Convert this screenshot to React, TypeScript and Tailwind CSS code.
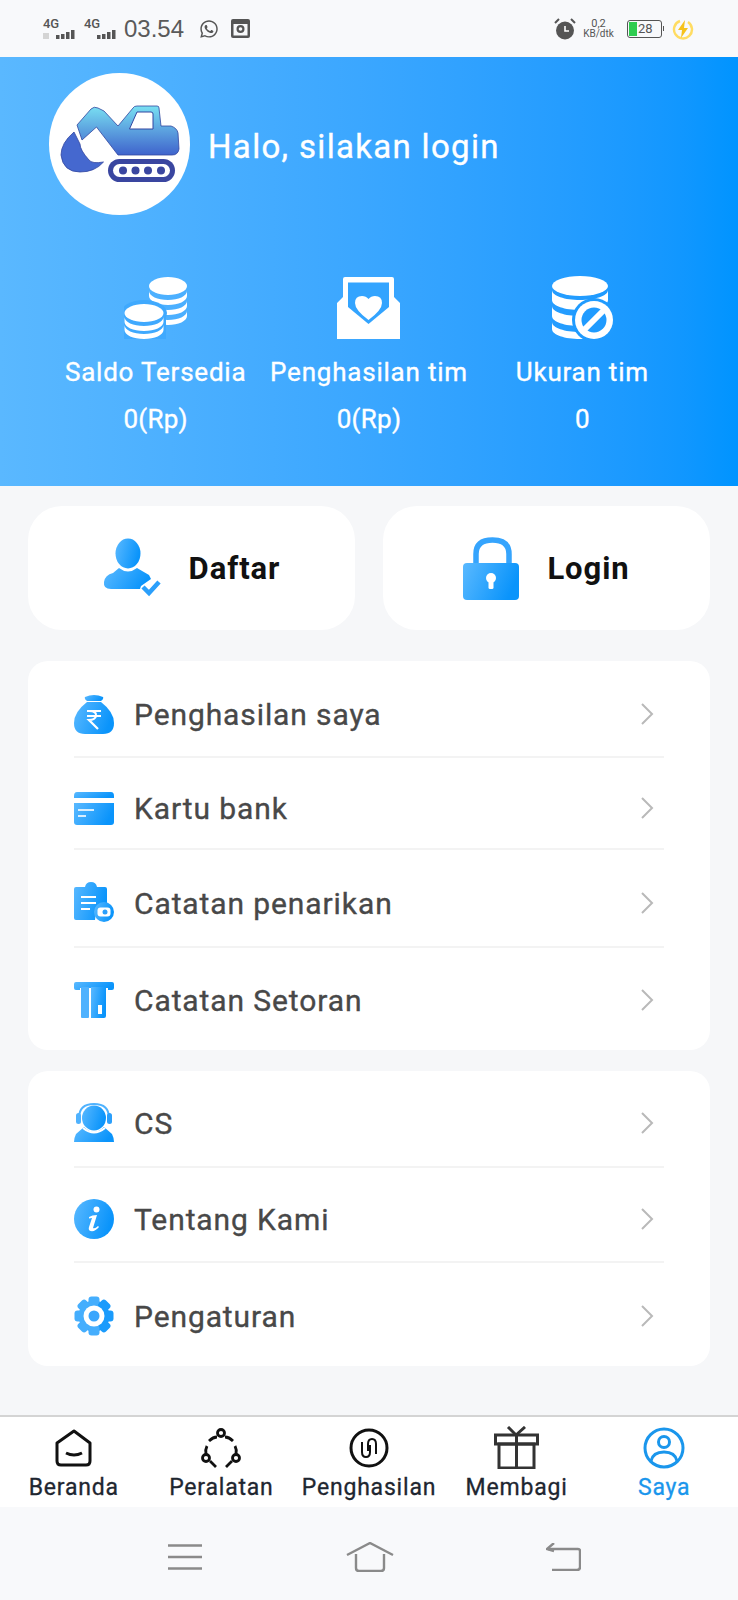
import { FaWhatsapp } from "react-icons/fa";
import type { ReactNode } from "react";

const font = "font-['Roboto',sans-serif]";

const Defs = () => (
  <svg className="absolute h-0 w-0">
    <defs>
      <linearGradient id="blue" x1="0" y1="0" x2="1" y2="0.3">
        <stop offset="0" stopColor="#5ab9ff" />
        <stop offset="1" stopColor="#0a94fb" />
      </linearGradient>
      <linearGradient id="digger" x1="0" y1="0" x2="0" y2="1">
        <stop offset="0" stopColor="#79e0f2" />
        <stop offset="1" stopColor="#3f63cc" />
      </linearGradient>
    </defs>
  </svg>
);

const Signal = ({ faded }: { faded?: boolean }) => (
  <div className="flex w-[32px] flex-col">
    <span className="text-[13px] leading-[11px] font-medium tracking-[-0.02em] text-[#555]">4G</span>
    <svg width="32" height="9" viewBox="0 0 32 9" className="mt-[1px]">
      {faded && <rect x="0" y="3" width="6" height="6" fill="#d4d4d4" />}
      <rect x="13" y="5" width="3.500" height="4" fill="#555" />
      <rect x="18" y="4" width="3.500" height="5" fill="#555" />
      <rect x="23" y="2" width="3.500" height="7" fill="#555" />
      <rect x="28" y="0" width="3.500" height="9" fill="#555" />
    </svg>
  </div>
);

const StatusBar = () => (
  <div className="flex h-[57px] items-center bg-[#f8f9fb] pr-[44px] pl-[43px]">
    <Signal faded />
    <div className="ml-[9px]">
      <Signal />
    </div>
    <span className="ml-[8px] font-['Liberation_Sans',sans-serif] text-[24px] text-[#5a5a5a]">03.54</span>
    <FaWhatsapp className="ml-[15px] text-[20px] text-[#555]" />
    <svg width="19" height="19" viewBox="0 0 19 19" className="ml-[12px]">
      <rect x="0" y="0" width="19" height="19" rx="2" fill="#555" />
      <rect x="2.500" y="5" width="14" height="11.500" fill="#f8f9fb" />
      <circle cx="9.500" cy="10" r="4" fill="#555" />
      <circle cx="9.500" cy="10" r="1.800" fill="#f8f9fb" />
    </svg>
    <div className="flex-1" />
    <svg width="22" height="22" viewBox="0 0 22 22">
      <circle cx="11" cy="12.500" r="9" fill="#555" />
      <path d="M11 8v5h4" fill="none" stroke="#fff" strokeWidth="1.600" />
      <path d="M1 5l4-4M21 5l-4-4" stroke="#555" strokeWidth="2" />
    </svg>
    <div className="ml-[6px] flex w-[33px] flex-col items-center text-[#555]">
      <span className="text-[11px] leading-[10px]">0,2</span>
      <span className="text-[10px] leading-[10px]">KB/dtk</span>
    </div>
    <div className="ml-[12px] flex h-[18px] w-[35px] items-center rounded-[3px] border border-[#555] p-[1px]">
      <div className="h-full w-[8px] bg-[#2ecc4f]" />
      <span className="ml-[1px] text-[13px] leading-none text-[#555]">28</span>
    </div>
    <div className="ml-[1px] h-[5px] w-[1px] bg-[#555]" />
    <svg width="22" height="22" viewBox="0 0 22 22" className="ml-[8px]">
      <path d="M8 3a9 9 0 1 0 8 1" fill="none" stroke="#ffdc62" strokeWidth="2.400" />
      <path d="M13 2L6 12h4l-1 8 7-10h-4z" fill="#f6c21c" />
    </svg>
  </div>
);

const Logo = () => (
  <svg viewBox="49 73 141 142" className="h-[142px] w-[141px] rounded-full bg-white">
    <path
      d="M77 125L91 109Q94 106 98 108L104 111L118 126L133 108Q134 106 137 106L157 106Q159 106 159 108L161 126H171Q177 128 178 133L179 149Q178 155 172 155H118L96.500 127L82 140Z"
      fill="url(#digger)"
      stroke="#3246a0"
      strokeWidth="0.800"
    />
    <path d="M137 112H151Q153 112 153 114V129H129.500Z" fill="#fff" stroke="#3246a0" strokeWidth="1" />
    <path d="M74 132Q61 143 61 155Q63 172 80 172Q95 172 103.500 162Q92 164 89 160Q80 150 80 144Z" fill="#4568cf" stroke="#3246a0" strokeWidth="0.800" />
    <rect x="108" y="159" width="67" height="23" rx="11.500" fill="#3a46a0" />
    <rect x="113" y="164" width="57" height="13" rx="6.500" fill="#fff" />
    {[123, 135.5, 148, 161].map((x) => (
      <circle key={x} cx={x} cy="170.500" r="4" fill="#3a46a0" />
    ))}
  </svg>
);

const band = (x: number, y: number, rx: number) =>
  `M${x} ${y}c0 5 ${rx * 0.45} 9 ${rx} 9s${rx} -4 ${rx} -9v5c0 5 -${rx * 0.45} 9 -${rx} 9s-${rx} -4 -${rx} -9z`;

const CoinsIcon = () => (
  <svg width="64" height="62" viewBox="0 0 64 62">
    <ellipse cx="44" cy="9" rx="19" ry="9" fill="#fff" />
    {[14, 24, 34].map((y) => (
      <path key={y} d={band(25, y, 19)} fill="#fff" />
    ))}
    <ellipse cx="20" cy="36" rx="23" ry="13" fill="#3fa9fe" />
    <rect x="0" y="36" width="42" height="26" fill="#3fa9fe" />
    <ellipse cx="20" cy="36" rx="19.500" ry="9" fill="#fff" />
    {[40, 48].map((y) => (
      <path key={y} d={band(0.5, y, 19.5)} fill="#fff" />
    ))}
  </svg>
);

const EnvelopeIcon = () => (
  <svg width="63" height="62" viewBox="0 0 63 62">
    <path d="M0 26L6 20V2Q6 0 8 0H55Q57 0 57 2V20L63 26V62H0Z" fill="#fff" />
    <path d="M11 5.500H52V30L31.500 47L11 30Z" fill="#33a4ff" />
    <path d="M31.500 43Q18 33 18 26Q18 19 25 19Q29 19 31.500 22Q34 19 38 19Q45 19 45 26Q45 33 31.500 43Z" fill="#fff" />
  </svg>
);

const DatabaseIcon = () => (
  <svg width="63" height="63" viewBox="0 0 63 63">
    <ellipse cx="29" cy="10" rx="28" ry="10" fill="#fff" />
    <path d="M1 14c0 6 13 10 28 10s28 -4 28 -10v10c0 6 -13 10 -28 10s-28 -4 -28 -10z" fill="#fff" />
    <path d="M1 30c0 6 13 10 28 10s28 -4 28 -10v10c0 6 -13 10 -28 10s-28 -4 -28 -10z" fill="#fff" />
    <path d="M1 46c0 6 13 10 28 10s28 -4 28 -10v7c0 6 -13 10 -28 10s-28 -4 -28 -10z" fill="#fff" />
    <circle cx="43" cy="44" r="22" fill="#1f9bff" />
    <circle cx="43" cy="44" r="19" fill="#fff" />
    <circle cx="43" cy="44" r="12.500" fill="#1f9bff" />
    <path d="M33 54L53 34" stroke="#fff" strokeWidth="6" />
  </svg>
);

const stats = [
  { label: "Saldo Tersedia", value: "0(Rp)", icon: <CoinsIcon /> },
  { label: "Penghasilan tim", value: "0(Rp)", icon: <EnvelopeIcon /> },
  { label: "Ukuran tim", value: "0", icon: <DatabaseIcon /> },
];

const Header = () => (
  <div className="h-[429px] bg-gradient-to-r from-[#5ab8ff] to-[#0094ff] px-[49px] pt-[16px]">
    <div className="flex items-center gap-[18px]">
      <Logo />
      <span className="pt-[4px] text-[33px] leading-none tracking-[0.04em] text-white [-webkit-text-stroke:0.35px]">Halo, silakan login</span>
    </div>
    <div className="mt-[61px] grid grid-cols-3">
      {stats.map((stat) => (
        <div key={stat.label} className="flex flex-col items-center text-white">
          <div className="flex h-[63px] items-center">{stat.icon}</div>
          <span className="mt-[17px] text-[26px] leading-[32px] tracking-[0.03em] whitespace-nowrap [-webkit-text-stroke:0.35px]">{stat.label}</span>
          <span className="mt-[15px] text-[26px] leading-[32px] tracking-[0.01em] [-webkit-text-stroke:0.35px]">{stat.value}</span>
        </div>
      ))}
    </div>
  </div>
);

const PersonCheckIcon = () => (
  <svg width="58" height="62" viewBox="104 536 58 62">
    <ellipse cx="129" cy="552.500" rx="12.500" ry="15" fill="url(#blue)" />
    <path d="M120 567Q129 574 138 567L150 574L152 578L142 585L141 588H112Q104 588 105 581Q106 574 114 572Z" fill="url(#blue)" />
    <path d="M144 586L150 592L160 581" fill="none" stroke="#2b9ffb" strokeWidth="4.500" />
  </svg>
);

const LockIcon = () => (
  <svg width="56" height="63" viewBox="466 536 56 63">
    <path d="M479 564V553Q479 539 495.500 539Q512 539 512 553V564" fill="none" stroke="#35a4fd" strokeWidth="5.500" />
    <rect x="466" y="562" width="56" height="37" rx="4" fill="url(#blue)" />
    <circle cx="494" cy="577" r="5" fill="#fff" />
    <rect x="491.500" y="578" width="5" height="10" rx="1.500" fill="#fff" />
  </svg>
);

const Chevron = () => (
  <svg width="14" height="24" viewBox="0 0 14 24" className="shrink-0">
    <path d="M2 2L12 12L2 22" fill="none" stroke="#b9b9b9" strokeWidth="2" />
  </svg>
);

const MoneyBagIcon = () => (
  <svg width="40" height="40" viewBox="0 0 40 40">
    <path d="M11 3Q20 -1 29 3Q30 5 27 7H13Q10 5 11 3Z" fill="url(#blue)" />
    <path d="M13 8H27Q40 18 40 29Q40 40 29 40H11Q0 40 0 29Q0 18 13 8Z" fill="url(#blue)" />
    <path d="M13 17H27M13 22H27M15 17Q23 17 22 22Q21 26 15 26L24 35" fill="none" stroke="#fff" strokeWidth="2.200" />
  </svg>
);

const CardIcon = () => (
  <svg width="40" height="33" viewBox="0 0 40 33">
    <path d="M3 0H37Q40 0 40 4V6H0V4Q0 0 3 0Z" fill="url(#blue)" />
    <path d="M0 11H40V30Q40 33 37 33H3Q0 33 0 30Z" fill="url(#blue)" />
    <path d="M4 18H20M4 24H12" stroke="#fff" strokeWidth="2" opacity="0.8" />
  </svg>
);

const ClipboardIcon = () => (
  <svg width="40" height="42" viewBox="0 0 40 42">
    <path d="M2 5H11Q12 0 17 0Q22 0 23 5H31Q33 5 33 7V22Q22 22 21 38H2Q0 38 0 36V7Q0 5 2 5Z" fill="url(#blue)" />
    <path d="M7 15H22M7 21H22M7 27H16" stroke="#fff" strokeWidth="2" />
    <circle cx="30" cy="30" r="10" fill="url(#blue)" />
    <rect x="23.500" y="25.500" width="13" height="9" rx="3" fill="#fff" />
    <circle cx="31" cy="30" r="2.500" fill="#2b9ffb" />
  </svg>
);

const AtmIcon = () => (
  <svg width="40" height="36" viewBox="0 0 40 36">
    <path d="M2 0H38Q40 0 40 2V6Q40 8 38 8H34V6H6V8H2Q0 8 0 6V2Q0 0 2 0Z" fill="url(#blue)" />
    <rect x="7" y="5" width="8" height="31" rx="1" fill="#4fb2fe" />
    <path d="M17 5H32V34Q32 36 30 36H17Z" fill="url(#blue)" />
    <rect x="24" y="23" width="4" height="9" fill="#fff" />
  </svg>
);

const AgentIcon = () => (
  <svg width="40" height="40" viewBox="0 0 40 40">
    <path d="M5 15Q5 1 20 1Q35 1 35 15" fill="none" stroke="#4fb2fe" strokeWidth="2" />
    <rect x="2" y="10" width="5" height="11" rx="2.500" fill="#4fb2fe" />
    <rect x="33" y="10" width="5" height="11" rx="2.500" fill="#2b9ffb" />
    <ellipse cx="20" cy="15" rx="12" ry="12.500" fill="url(#blue)" />
    <path d="M10 24Q20 34 30 24L38 31Q40 35 40 39H0Q0 35 2 31Z" fill="url(#blue)" />
    <path d="M9 25Q20 34 31 25" fill="none" stroke="#fff" strokeWidth="2" />
  </svg>
);

const InfoIcon = () => (
  <svg width="40" height="40" viewBox="0 0 40 40">
    <circle cx="20" cy="20" r="20" fill="url(#blue)" />
    <circle cx="22.500" cy="10.500" r="3" fill="#fff" />
    <path d="M15 18Q18 16 23 16L19 29Q21 30 24 27L25 28Q21 33 16.500 32Q14 31 15 28L18 19L15 19.500Z" fill="#fff" />
  </svg>
);

const GearIcon = () => (
  <svg width="40" height="40" viewBox="0 0 40 40">
    <circle cx="20" cy="20" r="15.500" fill="url(#blue)" />
    {[0, 45, 90, 135, 180, 225, 270, 315].map((deg) => (
      <rect key={deg} x="14.500" y="0.500" width="11" height="10" rx="3" fill={deg > 0 && deg < 180 ? "#1a9bfc" : "#45aefd"} transform={`rotate(${deg} 20 20)`} />
    ))}
    <circle cx="20" cy="20" r="10.500" fill="#fff" />
    <circle cx="20" cy="20" r="5.500" fill="#3aa6fd" />
  </svg>
);

type Row = { label: string; icon: ReactNode; rowClass: string; last?: boolean };

const firstMenu: Row[] = [
  { label: "Penghasilan saya", icon: <MoneyBagIcon />, rowClass: "h-[97px] pt-[11px]" },
  { label: "Kartu bank", icon: <CardIcon />, rowClass: "h-[92px] pt-[10px]" },
  { label: "Catatan penarikan", icon: <ClipboardIcon />, rowClass: "h-[98px] pt-[10px]" },
  { label: "Catatan Setoran", icon: <AtmIcon />, rowClass: "h-[102px] pt-[2px]", last: true },
];

const secondMenu: Row[] = [
  { label: "CS", icon: <AgentIcon />, rowClass: "h-[97px] pt-[9px]" },
  { label: "Tentang Kami", icon: <InfoIcon />, rowClass: "h-[95px] pt-[9px]" },
  { label: "Pengaturan", icon: <GearIcon />, rowClass: "h-[103px] pt-[2px]", last: true },
];

const Menu = ({ rows }: { rows: Row[] }) => (
  <div className="rounded-[20px] bg-white px-[46px]">
    {rows.map((row) => (
      <div key={row.label} className={`flex items-center ${row.rowClass} ${row.last ? "" : "border-b-2 border-[#f3f3f3]"}`}>
        <div className="flex w-[60px] shrink-0 items-center">{row.icon}</div>
        <span className="flex-1 pt-[2px] text-[30px] leading-none tracking-[0.03em] text-[#484848] [-webkit-text-stroke:0.35px]">{row.label}</span>
        <div className="mr-[10px] flex">
          <Chevron />
        </div>
      </div>
    ))}
  </div>
);

const HomeTab = () => (
  <svg width="38" height="38" viewBox="0 0 38 38">
    <path d="M2 14L19 2L35 14V32Q35 36 31 36H6Q2 36 2 32Z" fill="none" stroke="#111" strokeWidth="3" strokeLinejoin="round" />
    <path d="M11 24Q19 28 27 24" fill="none" stroke="#111" strokeWidth="3" />
  </svg>
);

const ToolsTab = () => (
  <svg width="40" height="40" viewBox="0 0 40 40" fill="none" stroke="#111" strokeWidth="2.800">
    <circle cx="20" cy="5" r="3.500" />
    <circle cx="5" cy="30" r="3.500" />
    <circle cx="35" cy="30" r="3.500" />
    <path d="M8 13Q12 9 16 9M24 9Q28 9 32 13M6 18Q4 22 5 26M34 18Q36 22 35 26M9 33L15 39M31 33L25 39" />
  </svg>
);

const EarnTab = () => (
  <svg width="40" height="40" viewBox="0 0 40 40" fill="none" stroke="#111">
    <circle cx="20" cy="20" r="18" strokeWidth="3" />
    <path d="M13 14V24Q13 29 17 29Q21 29 21 24V17" strokeWidth="2" />
    <path d="M19 23V16Q19 11 23 11Q27 11 27 16V26" strokeWidth="2" />
  </svg>
);

const GiftTab = () => (
  <svg width="45" height="43" viewBox="0 0 45 43" fill="none" stroke="#333" strokeWidth="3">
    <path d="M14 1L22 9L31 1" />
    <rect x="1.500" y="9" width="42" height="9" />
    <rect x="5" y="18" width="35" height="24" />
    <path d="M22.500 9V42" />
  </svg>
);

const MeTab = () => (
  <svg width="42" height="42" viewBox="0 0 42 42" fill="none" stroke="#1a96ec" strokeWidth="3">
    <circle cx="21" cy="21" r="19" />
    <circle cx="21" cy="15" r="5.500" />
    <path d="M8 34Q10 25 21 25Q32 25 34 34" />
  </svg>
);

const tabs = [
  { label: "Beranda", icon: <HomeTab />, active: false },
  { label: "Peralatan", icon: <ToolsTab />, active: false },
  { label: "Penghasilan", icon: <EarnTab />, active: false },
  { label: "Membagi", icon: <GiftTab />, active: false },
  { label: "Saya", icon: <MeTab />, active: true },
];

const TabBar = () => (
  <div className="grid h-[92px] grid-cols-5 border-t-2 border-[#d4d4d4] bg-white pt-[9px]">
    {tabs.map((tab) => (
      <div key={tab.label} className="flex flex-col items-center">
        <div className="flex h-[43px] items-center">{tab.icon}</div>
        <span className={`mt-[5px] text-[23px] leading-[28px] tracking-[0.035em] whitespace-nowrap [-webkit-text-stroke:0.3px] ${tab.active ? "text-[#1a96ec]" : "text-[#1e2630]"}`}>
          {tab.label}
        </span>
      </div>
    ))}
  </div>
);

const NavBar = () => (
  <div className="flex h-[93px] items-center bg-[#f8f9fb] pt-[7px] pl-[168px]">
    <svg width="34" height="26" viewBox="0 0 34 26" stroke="#8a8a8a" strokeWidth="2.400">
      <path d="M0 1.500H34M0 13H34M0 24.500H34" />
    </svg>
    <svg width="48" height="30" viewBox="0 0 48 30" fill="none" stroke="#8a8a8a" strokeWidth="2.400" className="ml-[144px]">
      <path d="M1 13L24 1L47 13M10 12V26Q10 29 13 29H35Q38 29 38 26V12" />
    </svg>
    <svg width="35" height="28" viewBox="0 0 35 28" fill="none" stroke="#8a8a8a" strokeWidth="2.400" className="ml-[152px]">
      <path d="M2 6H32Q34 6 34 8V24Q34 27 31 27H6" />
      <path d="M8 0L1 6L8 8" />
    </svg>
  </div>
);

export default function App() {
  return (
    <div className={`flex h-[1600px] flex-col bg-[#f6f7f9] ${font}`}>
      <Defs />
      <StatusBar />
      <Header />
      <main className="flex-1 px-[28px] pt-[20px]">
        <div className="grid grid-cols-2 gap-[28px]">
          <div className="flex h-[124px] items-center justify-center gap-[28px] rounded-[34px] bg-white">
            <PersonCheckIcon />
            <span className="pt-[3px] text-[31px] font-bold tracking-[0.03em] text-[#111]">Daftar</span>
          </div>
          <div className="flex h-[124px] items-center justify-center gap-[28px] rounded-[34px] bg-white">
            <LockIcon />
            <span className="pt-[3px] text-[31px] font-bold tracking-[0.03em] text-[#111]">Login</span>
          </div>
        </div>
        <div className="mt-[31px]">
          <Menu rows={firstMenu} />
        </div>
        <div className="mt-[21px]">
          <Menu rows={secondMenu} />
        </div>
      </main>
      <TabBar />
      <NavBar />
    </div>
  );
}
